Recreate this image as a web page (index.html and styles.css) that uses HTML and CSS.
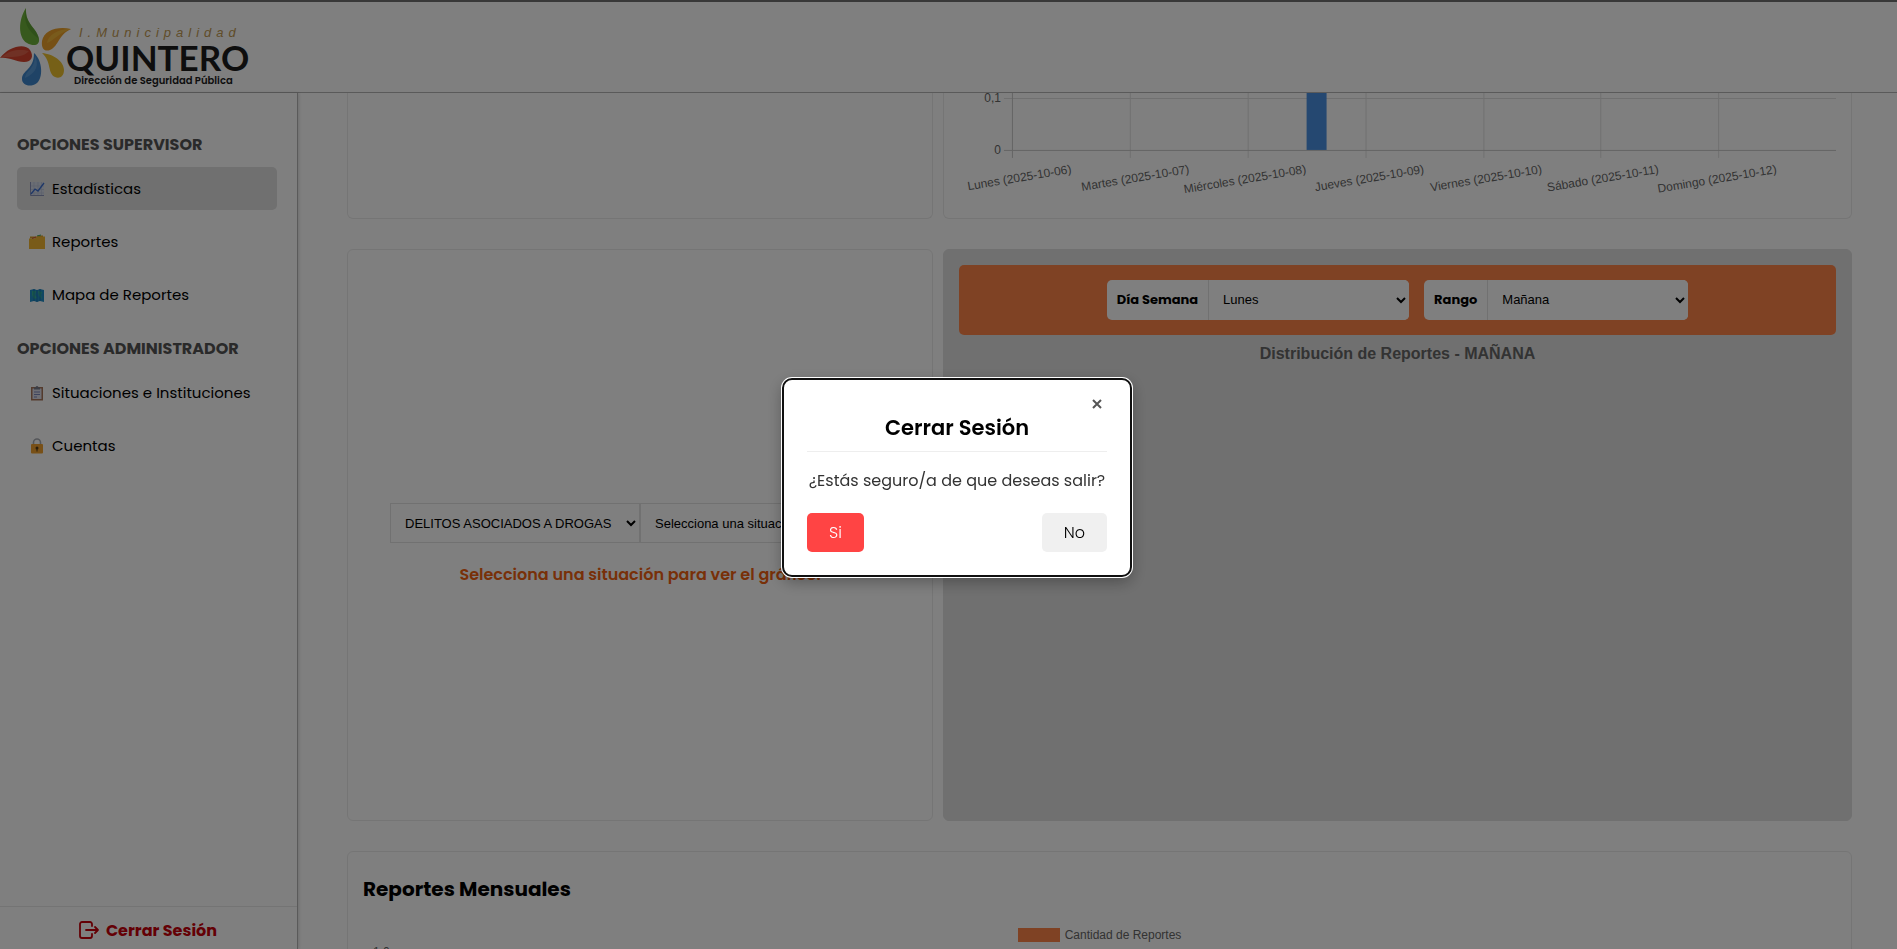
FILE: index.html
```html
<!DOCTYPE html>
<html lang="es">
<head>
<meta charset="utf-8">
<title>Municipalidad de Quintero - Estadísticas</title>
<link rel="stylesheet" href="styles.css">
</head>
<body>
<header class="header">
  <svg class="logo" viewBox="0 0 250 90" role="img" aria-label="I. Municipalidad Quintero">
    <path fill="#6fb33a" d="M26 6C18 18 18 36 27 41c7 4 13 2 12-4C37 25 25 23 26 6Z"/>
    <path fill="#4d8f2c" d="M26 6c-3 14 1 22 13 31C37 25 25 23 26 6Z" opacity=".5"/>
    <path fill="#eda12a" d="M71 27C58 24 44 28 42 39c-1 8 3 11 8 9 9-4 8-15 21-21Z"/>
    <path fill="#f6c445" d="M71 27c-13 0-23 6-24 14 6-2 13-11 24-14Z" opacity=".6"/>
    <path fill="#d8452f" d="M0 56c9-12 25-15 30-8 4 6 2 12-6 12-9 0-14-5-24-4Z"/>
    <path fill="#e8785e" d="M2 55c8-8 20-8 27-6-6 7-17 6-27 6Z" opacity=".6"/>
    <path fill="#3f86cc" d="M34 51c9 8 9 25 3 30-7 5-15 2-15-4 0-9 12-9 12-26Z"/>
    <path fill="#6aa8e0" d="M35 54c4 8 2 17-10 22 1-8 10-9 10-22Z" opacity=".6"/>
    <path fill="#edc02e" d="M42 51c11 1 22 8 22 17 0 7-5 9-9 7-8-4-3-15-13-24Z"/>
    <text class="logo-top" x="79" y="35">I.Municipalidad</text>
    <text class="logo-name" x="66" y="69">QUINTERO</text>
    <text class="logo-sub" x="74" y="82">Dirección de Seguridad Pública</text>
  </svg>
</header>

<div class="layout">
  <aside class="sidebar">
    <nav class="nav">
      <h2 class="nav-title">OPCIONES SUPERVISOR</h2>
      <ul class="nav-list">
        <li><a class="nav-link active" href="#estadisticas">
          <svg class="nav-icon" viewBox="0 0 16 16" aria-hidden="true"><path fill="#d5dbe8" d="M1 1h14v14H1z"/><path d="M1 5h14M1 8.500h14M1 12h14M5 1v14M9 1v14M12.500 1v14" stroke="#b9c2d8" stroke-width=".7"/><path d="M1.500 1v13.500H15" fill="none" stroke="#8a93b8"/><path d="M2 13l4-5 3 2 6-8" fill="none" stroke="#3d6fd0" stroke-width="1.300"/></svg>Estadísticas</a></li>
        <li><a class="nav-link" href="#reportes">
          <svg class="nav-icon" viewBox="0 0 16 16" aria-hidden="true"><path fill="#d99d27" d="M1 2.500h7l1-1h5v3H1z"/><path stroke="#45a86a" d="M8 2l4-1"/><path fill="#f2b632" d="M0 4.500h6l2-2h8V15H0z"/><path stroke="#d4543c" d="M3 4.500l4-1.500"/></svg>Reportes</a></li>
        <li><a class="nav-link" href="#mapa">
          <svg class="nav-icon" viewBox="0 0 16 16" aria-hidden="true"><path fill="#238fc7" d="M1 3l4-1 3 1 3-1 4 1v12l-4-1-3 1-3-1-4 1z"/><path fill="#35b394" d="M3 4l4 0-1 4 2 3-3 1-2-4zM9 4l4 1-1 3 1 4-3-3z"/><path stroke="#1767a6" stroke-width=".7" d="M5 2v12M8 3v12M11 2v12"/></svg>Mapa de Reportes</a></li>
      </ul>
      <h2 class="nav-title">OPCIONES ADMINISTRADOR</h2>
      <ul class="nav-list">
        <li><a class="nav-link" href="#situaciones">
          <svg class="nav-icon" viewBox="0 0 16 16" aria-hidden="true"><path fill="#a9765a" d="M2 2h12v13.500H2z"/><path fill="#dcdce8" d="M3.500 3.500h9V14h-9z"/><path fill="#777d8c" d="M5 2.500h1.500a1.500 1.500 0 0 1 3 0H11v2H5z"/><path stroke="#7d86b8" d="M5 7h6M5 9.500h6M5 12h3"/></svg>Situaciones e Instituciones</a></li>
        <li><a class="nav-link" href="#cuentas">
          <svg class="nav-icon" viewBox="0 0 16 16" aria-hidden="true"><path d="M4.500 7V4.500a3.500 3.500 0 0 1 7 0V7" fill="none" stroke="#a9acb3" stroke-width="1.600"/><rect x="2" y="6" width="12" height="9.500" rx="1" fill="#f0a12e"/><circle cx="8" cy="10" r="1.500" fill="#553a14"/><path stroke="#553a14" d="M8 10v3.500"/></svg>Cuentas</a></li>
      </ul>
    </nav>
    <button class="logout" type="button">
      <svg class="logout-icon" viewBox="0 0 22 20" aria-hidden="true"><path d="M14 6V4a2 2 0 0 0-2-2H4a2 2 0 0 0-2 2v12a2 2 0 0 0 2 2h8a2 2 0 0 0 2-2v-2M8 10h12M17 7l3 3-3 3" fill="none" stroke="currentColor" stroke-width="1.800" stroke-linecap="round" stroke-linejoin="round"/></svg>
      Cerrar Sesión
    </button>
  </aside>

  <main class="main">
    <section class="row">
      <article class="card card-cut"></article>
      <article class="card card-cut">
        <svg class="chart" viewBox="0 0 908 125" role="img" aria-label="Reportes por día de la semana">
          <g class="grid">
            <path d="M60 5.500H893M186.500 0V65M304.500 0V65M422.500 0V65M540.500 0V65M657.500 0V65M775.500 0V65"/>
            <path class="axis" d="M68.500 0V65M60 57.500H893"/>
          </g>
          <rect x="363" y="0" width="20" height="57" fill="#4a90e2"/>
          <g class="tick">
            <text x="57" y="9">0,1</text>
            <text x="57" y="61">0</text>
            <text transform="translate(128 80) rotate(-9.500)">Lunes (2025-10-06)</text>
            <text transform="translate(246 80) rotate(-9.500)">Martes (2025-10-07)</text>
            <text transform="translate(363 80) rotate(-9.500)">Miércoles (2025-10-08)</text>
            <text transform="translate(481 80) rotate(-9.500)">Jueves (2025-10-09)</text>
            <text transform="translate(599 80) rotate(-9.500)">Viernes (2025-10-10)</text>
            <text transform="translate(716 80) rotate(-9.500)">Sábado (2025-10-11)</text>
            <text transform="translate(834 80) rotate(-9.500)">Domingo (2025-10-12)</text>
          </g>
        </svg>
      </article>
    </section>

    <section class="row row-tall">
      <article class="card card-situation">
        <div class="select-pair">
          <select class="select" aria-label="Categoría"><option>DELITOS ASOCIADOS A DROGAS</option></select>
          <select class="select" aria-label="Situación"><option>Selecciona una situación</option></select>
        </div>
        <p class="hint">Selecciona una situación para ver el gráfico.</p>
      </article>
      <article class="card card-gray">
        <div class="filters">
          <div class="filter">
            <label for="dia">Día Semana</label>
            <select id="dia" class="filter-select"><option>Lunes</option></select>
          </div>
          <div class="filter">
            <label for="rango">Rango</label>
            <select id="rango" class="filter-select"><option>Mañana</option></select>
          </div>
        </div>
        <h3 class="chart-title">Distribución de Reportes - MAÑANA</h3>
      </article>
    </section>

    <section class="card card-monthly">
      <h2 class="monthly-title">Reportes Mensuales</h2>
      <div class="legend"><span class="swatch"></span>Cantidad de Reportes</div>
      <div class="y-label">1,0</div>
    </section>
  </main>
</div>

<div class="overlay">
  <section class="modal" role="dialog" aria-modal="true" aria-labelledby="modal-title">
    <button class="close" type="button" aria-label="Cerrar">
      <svg viewBox="0 0 10 10" aria-hidden="true"><path d="M1 1l8 8M9 1L1 9" stroke="currentColor" stroke-width="2"/></svg>
    </button>
    <h2 class="modal-title" id="modal-title">Cerrar Sesión</h2>
    <p class="modal-text">¿Estás seguro/a de que deseas salir?</p>
    <div class="modal-actions">
      <button class="btn btn-danger" type="button">Si</button>
      <button class="btn" type="button">No</button>
    </div>
  </section>
</div>
</body>
</html>
```

FILE: styles.css
```css
* { box-sizing: border-box; }

body {
  margin: 0;
  height: 100vh;
  display: flex;
  flex-direction: column;
  overflow: hidden;
  background: #fff;
  color: #000;
  font-family: Poppins, Inter, sans-serif;
  font-size: 15px;
}

h2, h3, p, ul { margin: 0; padding: 0; }
button { font-family: inherit; cursor: pointer; }

/* Header */
.header {
  flex: none;
  display: flex;
  border-top: 2px solid #707070;
  border-bottom: 1px solid #b4b4b4;
}
.logo { display: block; width: 250px; height: 90px; }
.logo-top { font: italic 13px "Liberation Sans", Arial, sans-serif; letter-spacing: 5px; fill: #c29a52; }
.logo-name { font: bold 35px Lato, sans-serif; fill: #1c1c1c; }
.logo-sub { font: 600 10px Poppins, Lato, sans-serif; fill: #1c1c1c; }

.layout { flex: 1; min-height: 0; display: flex; }

/* Sidebar */
.sidebar {
  flex: none;
  width: 298px;
  display: flex;
  flex-direction: column;
  border-right: 1px solid #b4b4b4;
  box-shadow: 1px 0 3px rgba(0, 0, 0, .15);
}
.nav { flex: 1; padding: 41px 20px 0 17px; }
.nav-title {
  margin-bottom: 11px;
  font-size: 16px;
  line-height: 22px;
  font-weight: 700;
  color: #555;
}
.nav-list { display: grid; gap: 10px; margin-bottom: 22px; list-style: none; }
.nav-link {
  display: flex;
  align-items: center;
  gap: 7px;
  height: 43px;
  padding: 0 12px;
  border-radius: 5px;
  color: #000;
  text-decoration: none;
  white-space: nowrap;
}
.nav-link.active { background: #e0e0e0; }
.nav-icon { flex: none; width: 16px; height: 16px; }
.logout {
  height: 43px;
  display: flex;
  align-items: center;
  justify-content: center;
  gap: 6px;
  padding: 4px 8px 0 6px;
  border: 0;
  border-top: 1px solid #e8e8e8;
  background: none;
  color: #c8000a;
  font-size: 16px;
  font-weight: 700;
}
.logout-icon { width: 22px; height: 20px; }

/* Content */
.main {
  flex: 1;
  min-width: 0;
  display: flex;
  flex-direction: column;
  gap: 30px;
  padding: 0 45px 0 49px;
  overflow: hidden;
}
.row { flex: none; display: grid; grid-template-columns: 586fr 909fr; gap: 10px; }
.card {
  min-width: 0;
  border: 1px solid #ebebeb;
  border-radius: 6px;
  background: #fff;
}
.card-cut { border-top: 0; border-radius: 0 0 6px 6px; }
.chart { display: block; width: 100%; }
.grid path { fill: none; stroke: #e0e0e0; }
.grid .axis { stroke: #c8c8c8; }
.tick { font: 12px "Liberation Sans", Arial, sans-serif; fill: #666; text-anchor: end; }

.row-tall { height: 572px; }
.card-situation {
  display: flex;
  flex-direction: column;
  justify-content: center;
  gap: 20px;
  padding: 21px 42px 0;
}
.select-pair { display: flex; }
.select, .filter-select {
  height: 40px;
  padding: 0 0 0 10px;
  border: 1px solid #e2e2e2;
  background: #fff;
  color: #000;
  font: 13px "Liberation Sans", Arial, sans-serif;
}
.select { flex: 1; min-width: 0; }
.hint {
  color: #f06010;
  font-size: 16px;
  line-height: 24px;
  font-weight: 600;
  text-align: center;
}
.card-gray { padding: 15px; border-color: #e0e0e0; background: #e0e0e0; }
.filters {
  display: flex;
  justify-content: center;
  gap: 15px;
  padding: 15px;
  border-radius: 5px;
  background: #ff8548;
}
.filter { display: flex; align-items: center; border-radius: 5px; background: #fff; }
.filter label { padding: 0 10px; font-size: 13px; font-weight: 700; }
.filter-select {
  width: 201px;
  border-width: 0 0 0 1px;
  border-radius: 0 5px 5px 0;
}
.chart-title {
  margin-top: 10px;
  color: #666;
  font: bold 16px/18px "Liberation Sans", Arial, sans-serif;
  text-align: center;
}
.card-monthly { flex: none; height: 400px; padding: 21px 15px; }
.monthly-title { font-size: 20px; line-height: 32px; font-weight: 700; }
.legend {
  display: flex;
  justify-content: center;
  align-items: center;
  gap: 5px;
  margin-top: 22px;
  color: #666;
  font: 12px/16px "Liberation Sans", Arial, sans-serif;
}
.swatch { width: 42px; height: 14px; background: #ff8548; }
.y-label {
  padding: 2px 10px;
  color: #666;
  font: 12px/14px "Liberation Sans", Arial, sans-serif;
}

/* Logout dialog */
.overlay {
  position: fixed;
  inset: 0;
  display: flex;
  align-items: center;
  justify-content: center;
  padding: 6px 0 0 17px;
  background: rgba(0, 0, 0, .5);
}
.modal {
  display: flex;
  flex-direction: column;
  min-width: 350px;
  padding: 19px 23px 23px;
  border: 2px solid #101010;
  border-radius: 10px;
  background: #fff;
  box-shadow: 0 0 0 1px #fff, 0 5px 15px rgba(0, 0, 0, .3);
}
.close {
  align-self: flex-end;
  display: flex;
  padding: 0 5px;
  border: 0;
  background: none;
  color: #555;
}
.close svg { width: 10px; height: 10px; }
.modal-title {
  padding: 4px 0 8px;
  border-bottom: 1px solid #eee;
  font-size: 21px;
  line-height: 30px;
  font-weight: 600;
  text-align: center;
}
.modal-text { margin: 16px 0 20px; color: #333; font-size: 16px; line-height: 25px; text-align: center; }
.modal-actions { display: flex; justify-content: space-between; }
.btn {
  padding: 0 22px;
  border: 0;
  border-radius: 5px;
  background: #f0f0f0;
  color: #000;
  font-size: 16px;
  line-height: 39px;
  font-weight: 300;
}
.btn-danger { background: #ff4444; color: #fff; }
```
